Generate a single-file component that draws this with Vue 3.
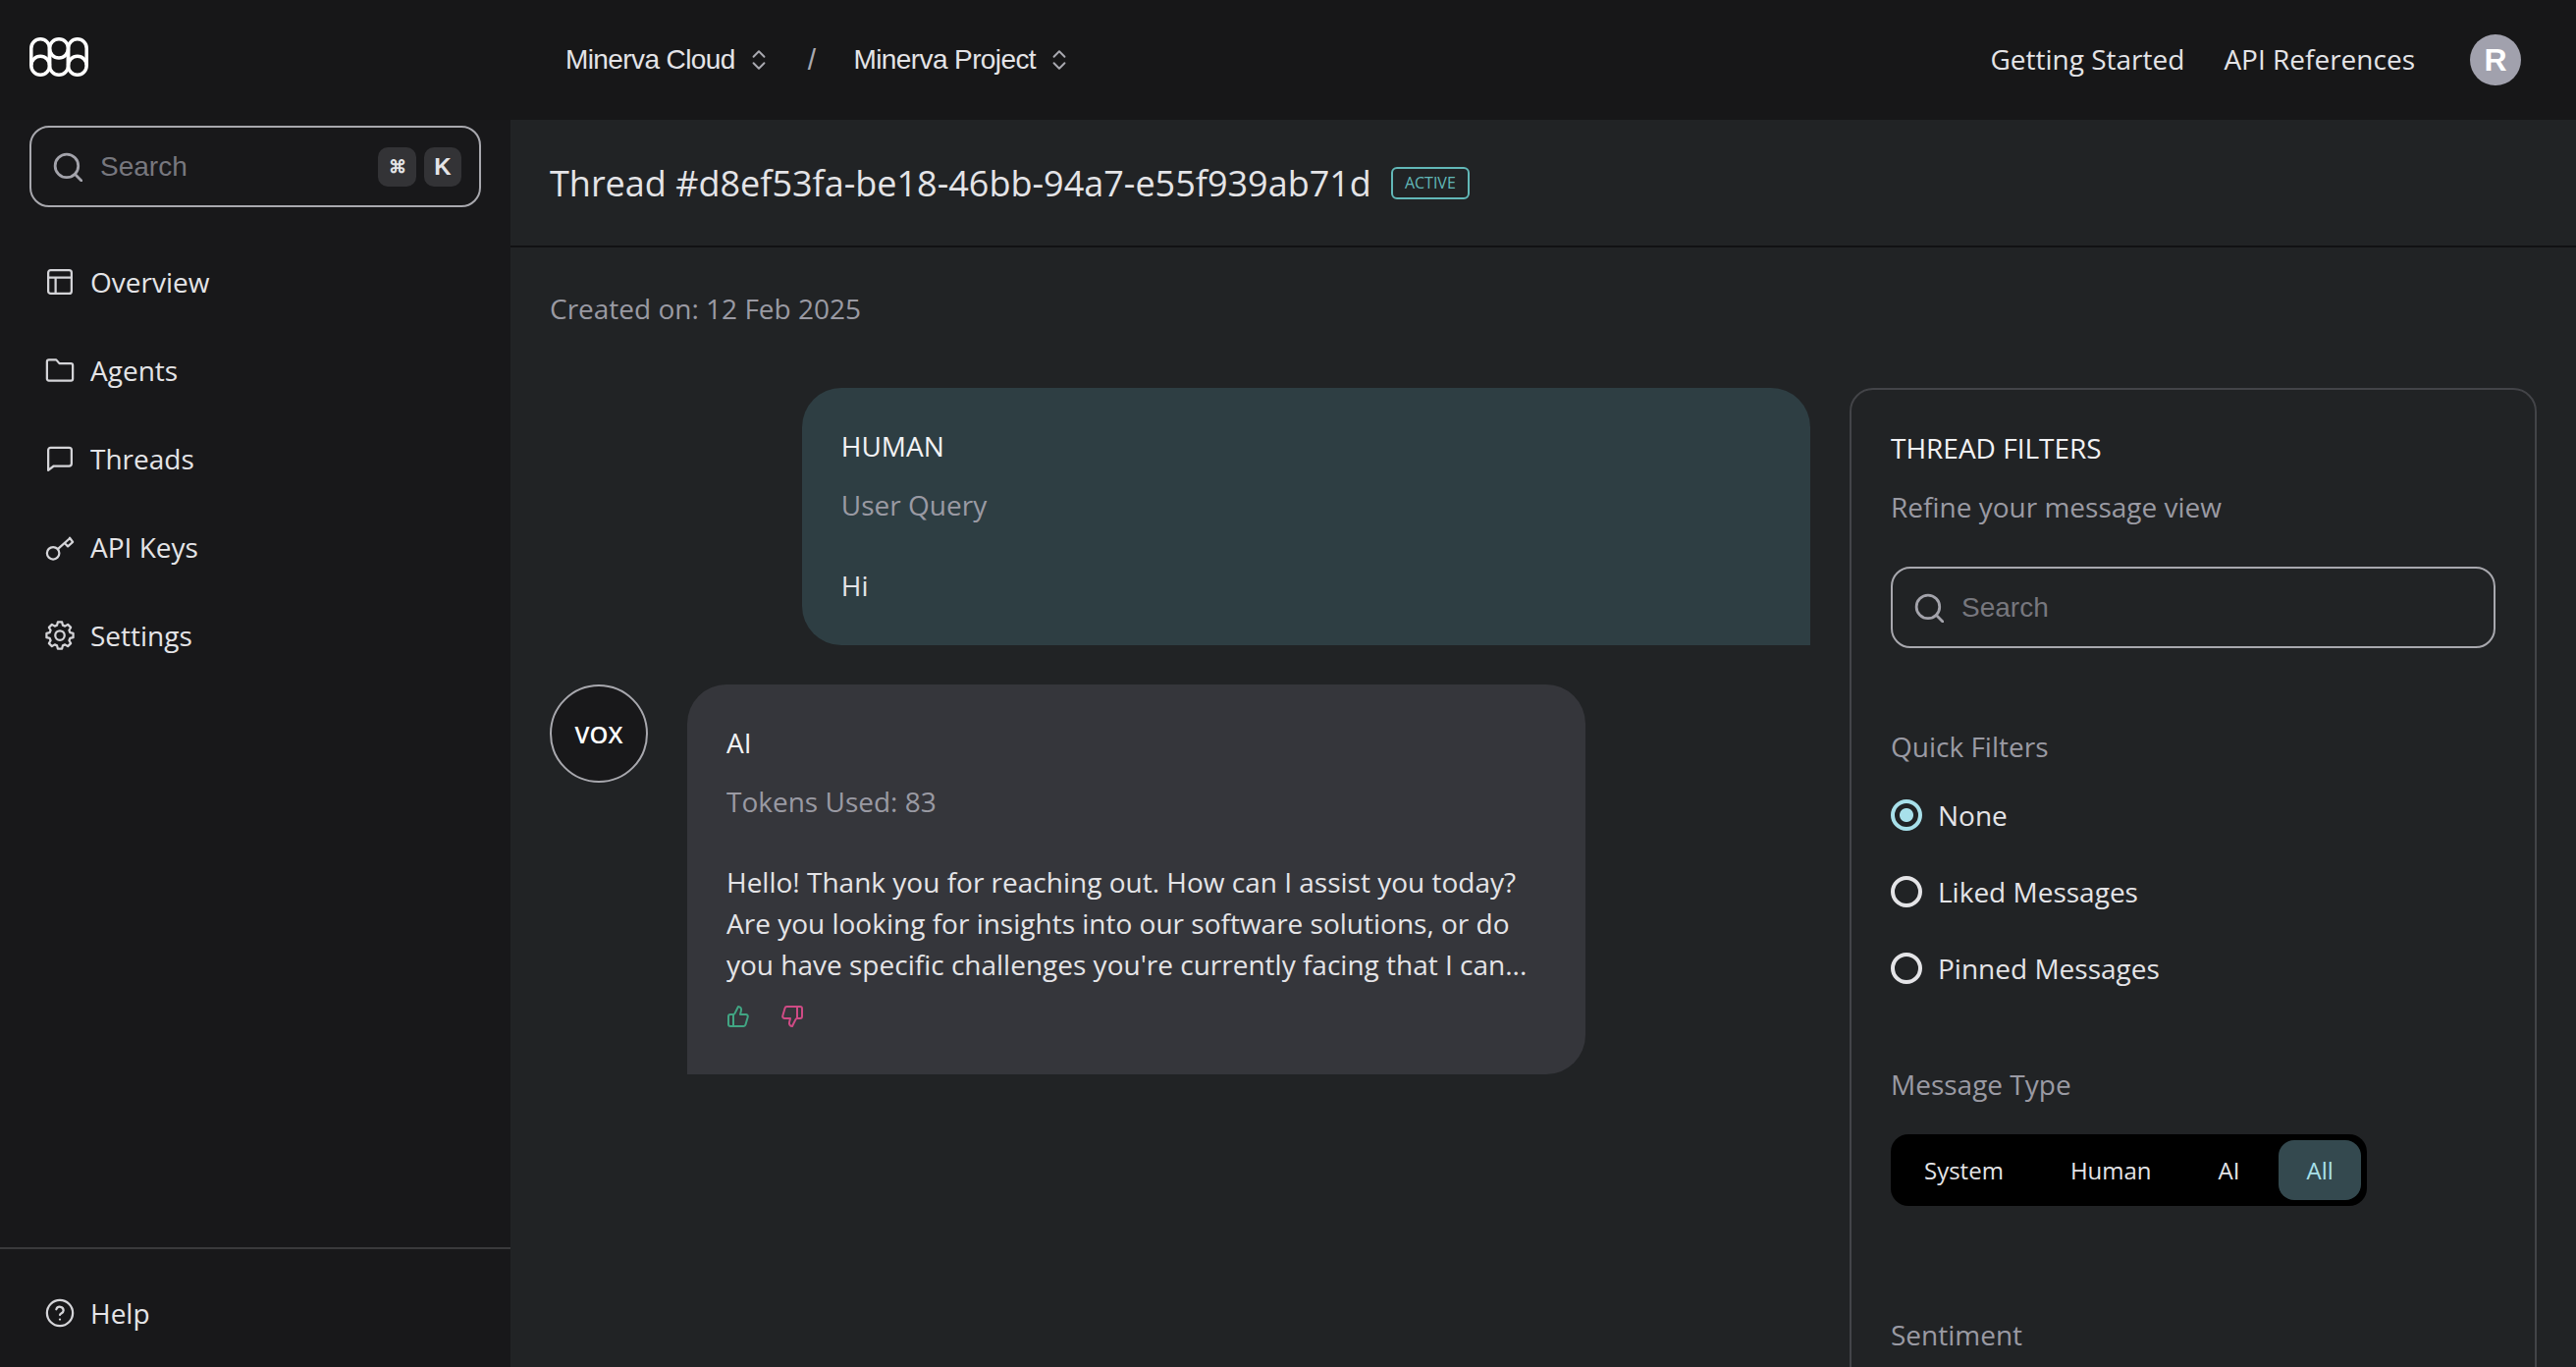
<script setup>
const navItems = [
  { label: 'Overview', icon: 'overview' },
  { label: 'Agents', icon: 'folder' },
  { label: 'Threads', icon: 'thread' },
  { label: 'API Keys', icon: 'key' },
  { label: 'Settings', icon: 'gear' },
]
const quickFilters = [
  { label: 'None', checked: true },
  { label: 'Liked Messages', checked: false },
  { label: 'Pinned Messages', checked: false },
]
const types = ['System', 'Human', 'AI', 'All']

const polar = (r, deg) => {
  const a = (deg * Math.PI) / 180
  return `${(12 + r * Math.cos(a)).toFixed(2)} ${(12 + r * Math.sin(a)).toFixed(2)}`
}
const gearPath = Array.from({ length: 8 }, (_, i) => {
  const a = i * 45 - 90
  return `${i ? 'L' : 'M'}${polar(8.6, a - 16)} L${polar(11, a - 9)} L${polar(11, a + 9)} L${polar(8.6, a + 16)}`
}).join(' ') + ' Z'
</script>

<template>
  <div class="app">
    <header class="topbar">
      <div class="brand">
        <svg class="logo" viewBox="0 0 60 40" fill="none" stroke="#fff" stroke-width="3.5">
          <rect x="1.800" y="1.800" width="18.700" height="36.400" rx="9.350" />
          <rect x="20.500" y="1.800" width="19" height="36.400" rx="9.500" />
          <rect x="39.500" y="1.800" width="18.700" height="36.400" rx="9.350" />
          <path d="M1.800 28.500A9.350 9.350 0 0 1 20.500 28.500M20.500 11.500A9.500 9.500 0 0 0 39.500 11.500M39.500 28.500A9.350 9.350 0 0 1 58.200 28.500" />
        </svg>
      </div>
      <nav class="crumbs">
        <span class="crumb">Minerva Cloud
          <svg class="updown" viewBox="0 0 16 22" fill="none" stroke="#a9a9b0" stroke-width="1.800" stroke-linecap="round" stroke-linejoin="round"><path d="M3 8l5-5 5 5M3 14l5 5 5-5" /></svg>
        </span>
        <span class="slash">/</span>
        <span class="crumb">Minerva Project
          <svg class="updown" viewBox="0 0 16 22" fill="none" stroke="#a9a9b0" stroke-width="1.800" stroke-linecap="round" stroke-linejoin="round"><path d="M3 8l5-5 5 5M3 14l5 5 5-5" /></svg>
        </span>
      </nav>
      <div class="toplinks">
        <a class="toplink">Getting Started</a>
        <a class="toplink">API References</a>
        <span class="avatar">R</span>
      </div>
    </header>

    <div class="body">
      <aside class="sidebar">
        <div class="side-top">
          <div class="search side-search">
            <svg class="search-icon" viewBox="0 0 28 28" fill="none" stroke="#a3a3ab" stroke-width="2.600" stroke-linecap="round"><circle cx="13" cy="13" r="11" /><path d="M21 21l6 6" /></svg>
            <span class="search-text">Search</span>
            <span class="kbd kbd-cmd">⌘</span>
            <span class="kbd">K</span>
          </div>
          <ul class="nav">
            <li v-for="item in navItems" :key="item.label" class="nav-item">
              <svg class="nav-icon" viewBox="0 0 24 24" fill="none" stroke="#d4d4d8" stroke-width="1.800" stroke-linecap="round" stroke-linejoin="round">
                <template v-if="item.icon === 'overview'">
                  <rect x="2.500" y="2.500" width="19" height="19" rx="2" /><path d="M2.500 8.500h19M8.500 21.500V8.500" />
                </template>
                <path v-else-if="item.icon === 'folder'" d="M21 20.500H3a1.500 1.500 0 0 1-1.500-1.500V5A1.500 1.500 0 0 1 3 3.500h6l2.600 3H21A1.500 1.500 0 0 1 22.500 8v11a1.500 1.500 0 0 1-1.500 1.500Z" />
                <path v-else-if="item.icon === 'thread'" d="M21.500 16a2 2 0 0 1-2 2H7l-4.500 3.500V5a2 2 0 0 1 2-2h15a2 2 0 0 1 2 2z" />
                <template v-else-if="item.icon === 'key'">
                  <circle cx="6.500" cy="17" r="5" /><path d="M10.500 13.500L20 5M16 9l2.500 2.500L22.500 8 20 4.500" />
                </template>
                <template v-else-if="item.icon === 'gear'">
                  <path :d="gearPath" /><circle cx="12" cy="12" r="3.800" />
                </template>
              </svg>
              <span>{{ item.label }}</span>
            </li>
          </ul>
        </div>
        <div class="side-bottom">
          <div class="nav-item">
            <svg class="nav-icon" viewBox="0 0 24 24" fill="none" stroke="#d4d4d8" stroke-width="1.800" stroke-linecap="round" stroke-linejoin="round"><circle cx="12" cy="12" r="10.500" /><path d="M9.090 9a3 3 0 0 1 5.830 1c0 2-2.900 2.500-2.900 3.500M12 17.200h.01" /></svg>
            <span>Help</span>
          </div>
        </div>
      </aside>

      <main class="main">
        <div class="title-bar">
          <h1 class="title">Thread #d8ef53fa-be18-46bb-94a7-e55f939ab71d</h1>
          <span class="badge">ACTIVE</span>
        </div>
        <div class="content">
          <p class="created">Created on: 12 Feb 2025</p>
          <div class="columns">
            <section class="chat">
              <div class="bubble human">
                <div class="who">HUMAN</div>
                <div class="sub">User Query</div>
                <div class="text">Hi</div>
              </div>
              <div class="ai-row">
                <div class="vox">VOX</div>
                <div class="bubble ai">
                  <div class="who">AI</div>
                  <div class="sub">Tokens Used: 83</div>
                  <div class="text">Hello! Thank you for reaching out. How can I assist you today? Are you looking for insights into our software solutions, or do you have specific challenges you're currently facing that I can...</div>
                  <div class="actions">
                    <svg class="thumb" viewBox="0 0 24 24" fill="none" stroke="#41a583" stroke-width="2" stroke-linecap="round" stroke-linejoin="round"><path d="M7 10v12" /><path d="M15 5.880 14 10h5.830a2 2 0 0 1 1.920 2.560l-2.330 8A2 2 0 0 1 17.500 22H4a2 2 0 0 1-2-2v-8a2 2 0 0 1 2-2h2.760a2 2 0 0 0 1.790-1.110L12 2a3.130 3.130 0 0 1 3 3.880Z" /></svg>
                    <svg class="thumb" viewBox="0 0 24 24" fill="none" stroke="#cf4b85" stroke-width="2" stroke-linecap="round" stroke-linejoin="round"><path d="M17 14V2" /><path d="M9 18.120 10 14H4.170a2 2 0 0 1-1.920-2.560l2.330-8A2 2 0 0 1 6.500 2H20a2 2 0 0 1 2 2v8a2 2 0 0 1-2 2h-2.760a2 2 0 0 0-1.790 1.110L12 22a3.130 3.130 0 0 1-3-3.880Z" /></svg>
                  </div>
                </div>
              </div>
            </section>

            <aside class="panel">
              <div class="panel-title">THREAD FILTERS</div>
              <div class="panel-sub">Refine your message view</div>
              <div class="search panel-search">
                <svg class="search-icon" viewBox="0 0 28 28" fill="none" stroke="#a3a3ab" stroke-width="2.600" stroke-linecap="round"><circle cx="13" cy="13" r="11" /><path d="M21 21l6 6" /></svg>
                <span class="search-text">Search</span>
              </div>
              <div class="group-label quick">Quick Filters</div>
              <div v-for="f in quickFilters" :key="f.label" class="radio-row">
                <span class="radio" :class="{ on: f.checked }"></span>
                <span>{{ f.label }}</span>
              </div>
              <div class="group-label type">Message Type</div>
              <div class="segments">
                <span v-for="t in types" :key="t" class="segment" :class="{ active: t === 'All' }">{{ t }}</span>
              </div>
              <div class="group-label sentiment">Sentiment</div>
            </aside>
          </div>
        </div>
      </main>
    </div>
  </div>
</template>

<style>
html, body { margin: 0; background: #18181a; }
</style>

<style scoped>
.app {
  width: 2624px;
  height: 1392px;
  overflow: hidden;
  display: flex;
  flex-direction: column;
  background: #18181a;
  color: #e4e4e7;
  font-family: "Open Sans", sans-serif;
  font-size: 28px;
}
.topbar {
  height: 122px;
  flex: none;
  display: flex;
  align-items: center;
  background: #171718;
  padding: 0 56px 0 30px;
}
.brand { width: 546px; flex: none; display: flex; align-items: center; padding-bottom: 6px; }
.logo { width: 60px; height: 40px; display: block; }
.crumbs {
  display: flex;
  align-items: center;
  font-family: "Liberation Sans", sans-serif;
  font-size: 28px;
  letter-spacing: -0.6px;
  color: #e4e4e7;
}
.crumb { display: flex; align-items: center; gap: 15px; }
.updown { width: 18px; height: 24px; }
.slash { color: #a9a9b0; margin: 0 39px 0 41px; font-size: 30px; }
.toplinks { margin-left: auto; display: flex; align-items: center; gap: 40px; }
.toplink { padding-bottom: 3px; }
.avatar {
  width: 52px;
  height: 52px;
  margin-left: 16px;
  border-radius: 50%;
  background: #a1a1ad;
  color: #fff;
  font-family: "Liberation Sans", sans-serif;
  font-weight: 700;
  font-size: 32px;
  display: flex;
  align-items: center;
  justify-content: center;
}
.body { flex: 1; display: flex; min-height: 0; }
.sidebar {
  width: 520px;
  flex: none;
  display: flex;
  flex-direction: column;
  justify-content: space-between;
  background: #18181a;
}
.side-top { padding: 6px 30px 0; }
.search {
  display: flex;
  align-items: center;
  height: 83px;
  box-sizing: border-box;
  border: 2px solid #a8a8ae;
  border-radius: 20px;
  font-family: "Liberation Sans", sans-serif;
}
.side-search { padding: 0 18px 0 22px; }
.panel-search { padding: 0 22px; margin-top: 41px; }
.search-icon { width: 30px; height: 30px; flex: none; }
.search-text { margin-left: 18px; color: #77777e; font-size: 28px; flex: 1; }
.kbd {
  width: 38px;
  height: 40px;
  border-radius: 10px;
  background: #333336;
  display: flex;
  align-items: center;
  justify-content: center;
  font-size: 24px;
  font-weight: 700;
  color: #e4e4e7;
}
.kbd-cmd { width: 39px; margin-right: 8px; font-size: 18px; }
.nav { list-style: none; margin: 31px 0 0; padding: 0 0 0 16px; }
.nav-item { display: flex; align-items: center; gap: 16px; height: 90px; color: #e4e4e7; }
.nav-icon { width: 30px; height: 30px; flex: none; }
.side-bottom {
  border-top: 2px solid #3a3a3c;
  height: 122px;
  box-sizing: border-box;
  padding: 20px 0 0 46px;
}
.main { flex: 1; min-width: 0; background: #212325; display: flex; flex-direction: column; }
.title-bar {
  height: 130px;
  flex: none;
  box-sizing: border-box;
  border-bottom: 2px solid #111113;
  display: flex;
  align-items: center;
  gap: 20px;
  padding: 0 40px;
}
.title { margin: 0; font-size: 36px; font-weight: 400; color: #e4e4e7; white-space: nowrap; }
.badge {
  height: 33px;
  box-sizing: border-box;
  border: 2px solid #62b8b8;
  border-radius: 6px;
  padding: 0 12px;
  font-size: 16px;
  color: #62b8b8;
  display: flex;
  align-items: center;
}
.content { padding: 41px 40px 0; flex: 1; min-height: 0; }
.created { margin: 0 0 60px; line-height: 42px; color: #9a9aa3; }
.columns { display: flex; gap: 40px; align-items: flex-start; }
.chat { flex: 1; min-width: 0; display: flex; flex-direction: column; gap: 40px; }
.bubble { box-sizing: border-box; padding: 39px 40px 40px; }
.human {
  width: 80%;
  align-self: flex-end;
  background: #2e3e43;
  border-radius: 40px 40px 0 40px;
}
.ai-row { display: flex; gap: 40px; align-items: flex-start; }
.vox {
  width: 100px;
  height: 100px;
  flex: none;
  box-sizing: border-box;
  border: 2px solid #a8a8ae;
  border-radius: 50%;
  background: #18181a;
  color: #fff;
  font-size: 24px;
  font-weight: 600;
  display: flex;
  align-items: center;
  justify-content: center;
}
.ai { width: 915px; background: #35363b; border-radius: 40px 40px 40px 0; }
.who { line-height: 40px; color: #f2f2f4; }
.sub { line-height: 40px; margin-top: 20px; color: #9a9aa3; }
.text { line-height: 42px; margin-top: 41px; color: #e4e4e7; }
.actions { display: flex; gap: 31px; margin-top: 20px; height: 31px; }
.thumb { width: 24px; height: 24px; }
.panel {
  width: 700px;
  min-height: 1100px;
  flex: none;
  box-sizing: border-box;
  border: 2px solid #434448;
  border-radius: 24px;
  padding: 39px 40px 0;
}
.panel-title { line-height: 40px; color: #f2f2f4; }
.panel-sub { line-height: 40px; margin-top: 20px; color: #9a9aa3; }
.group-label { line-height: 40px; color: #9a9aa3; }
.quick { margin-top: 80px; }
.radio-row { display: flex; align-items: center; gap: 16px; height: 78px; color: #e4e4e7; }
.quick + .radio-row { margin-top: 11px; }
.radio {
  width: 32px;
  height: 32px;
  flex: none;
  box-sizing: border-box;
  border: 4px solid #e4e4e7;
  border-radius: 50%;
}
.radio.on {
  border-color: #a8e0ea;
  background: radial-gradient(circle, #a8e0ea 0 6.500px, transparent 7.500px);
}
.type { margin-top: 59px; }
.segments {
  width: 485px;
  height: 73px;
  box-sizing: border-box;
  margin-top: 31px;
  padding: 6px;
  background: #000;
  border-radius: 18px;
  display: flex;
  gap: 12px;
  font-size: 24px;
}
.segment { padding: 0 28px; border-radius: 16px; display: flex; align-items: center; color: #e4e4e7; }
.segment.active { background: #34494f; color: #a8e0ea; }
.sentiment { margin-top: 111px; }
</style>
